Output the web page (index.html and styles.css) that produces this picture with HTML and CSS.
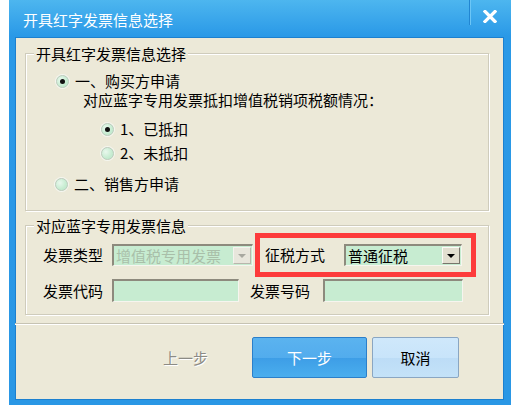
FILE: index.html
```html
<!DOCTYPE html>
<html>
<head>
<meta charset="utf-8">
<link rel="stylesheet" href="styles.css">
</head>
<body>
<div class="window">
  <div class="titlebar">
    <span class="title">开具红字发票信息选择</span>
    <span class="tsep"></span>
    <svg class="close" width="14" height="13" viewBox="0 0 14 13"><path d="M2 1.5 L12 11.5 M12 1.5 L2 11.5" stroke="#fff" stroke-width="3.2" stroke-linecap="square"/></svg>
  </div>
  <div class="content">
    <div class="group g1">
      <span class="legend">开具红字发票信息选择</span>
      <div class="row r1"><span class="radio checked"></span><span>一、购买方申请</span></div>
      <div class="row note">对应蓝字专用发票抵扣增值税销项税额情况：</div>
      <div class="row r3"><span class="radio checked"></span><span>1、已抵扣</span></div>
      <div class="row r4"><span class="radio"></span><span>2、未抵扣</span></div>
      <div class="row r5"><span class="radio"></span><span>二、销售方申请</span></div>
    </div>
    <div class="group g2">
      <span class="legend">对应蓝字专用发票信息</span>
      <div class="rowA">
        <span class="lbl">发票类型</span>
        <div class="combo disabled c1"><span class="cval">增值税专用发票</span><span class="dd"><span class="tri"></span></span></div>
        <div class="redbox">
          <span class="lbl">征税方式</span>
          <div class="combo c2"><span class="cval">普通征税</span><span class="dd"><span class="tri"></span></span></div>
        </div>
      </div>
      <div class="rowB">
        <span class="lbl">发票代码</span>
        <div class="input i1"></div>
        <span class="lbl l2">发票号码</span>
        <div class="input i2"></div>
      </div>
    </div>
    <div class="hsep"></div>
    <div class="buttons">
      <div class="btn btn-prev">上一步</div>
      <div class="btn btn-next">下一步</div>
      <div class="btn btn-cancel">取消</div>
    </div>
  </div>
</div>
</body>
</html>
```
FILE: styles.css
```css
body {
  margin: 0;
  background: #fff;
  font-family: "Noto Sans CJK SC", "Noto Sans", sans-serif;
  font-size: 15px;
  color: #000;
}
.window {
  margin-left: 9px;
  width: 502px;
  height: 405px;
  box-sizing: border-box;
  background: linear-gradient(#4db6ef, #2a99e7 36px, #2a97e5);
  padding: 0 7px 5px 6px;
  display: flex;
  flex-direction: column;
}
.titlebar {
  height: 37px;
  flex: none;
  display: flex;
  align-items: flex-start;
  color: #fff;
}
.title {
  margin: 10px 0 0 8px;
  line-height: 20px;
}
.tsep {
  margin-left: auto;
  width: 1px;
  height: 25px;
  background: #2186d2;
  box-shadow: 1px 0 0 #6cc6f6;
}
.close {
  margin: 10px 7px 0 13px;
}
.content {
  flex: 1;
  background: #ece9d8;
  display: flex;
  flex-direction: column;
  box-shadow: inset 0 0 0 1px #1c80cf;
}
.group {
  position: relative;
  margin-left: 10px;
  width: 464px;
  box-sizing: border-box;
  border: 1px solid #cfccbc;
  box-shadow: inset 1px 1px 0 #fff, 1px 1px 0 #fff;
}
.legend {
  position: absolute;
  top: -10px;
  left: 8px;
  padding: 0 2px;
  background: #ece9d8;
  line-height: 20px;
}
.g1 {
  margin-top: 16px;
  height: 158px;
  padding: 18px 0 0 30px;
}
.row {
  display: flex;
  align-items: center;
  height: 18px;
  line-height: 18px;
}
.radio {
  flex: none;
  position: relative;
  width: 13px;
  height: 13px;
  box-sizing: border-box;
  border-radius: 50%;
  border: 1px solid #bccdbf;
  background: radial-gradient(circle at 35% 35%, #e9f8ed 0, #c6ecd1 60%, #bde6c9 100%);
  box-shadow: 0 0 0 1px #f4f6f0;
  margin-right: 6px;
}
.radio.checked::after {
  content: "";
  position: absolute;
  left: 3px;
  top: 3px;
  width: 5px;
  height: 5px;
  border-radius: 50%;
  background: #111;
}
.note { margin-left: 27px; margin-top: 1px; }
.r3 { margin-top: 11px; margin-left: 45px; }
.r4 { margin-top: 6px; margin-left: 45px; }
.r5 { margin-top: 13px; margin-left: -1px; }

.g2 {
  margin-top: 14px;
  height: 90px;
  padding: 7px 0 0 17px;
}
.rowA, .rowB {
  display: flex;
  align-items: center;
}
.lbl {
  width: 60px;
  flex: none;
  line-height: 18px;
}
.combo, .input {
  box-sizing: border-box;
  border-style: solid;
  border-color: #8d8a7d #f6f5ef #f6f5ef #8d8a7d;
  border-width: 2px 1px 1px 2px;
  background: #c7ecd1;
}
.combo {
  height: 22px;
  display: flex;
  align-items: center;
}
.cval {
  flex: 1;
  padding-left: 2px;
  line-height: 18px;
  white-space: nowrap;
}
.c1 {
  margin-left: 9px;
  width: 141px;
}
.disabled .cval { color: #a9bfa9; }
.dd {
  flex: none;
  width: 18px;
  height: 17px;
  margin-right: 1px;
  box-sizing: border-box;
  border-style: solid;
  border-width: 1px;
  border-color: #fbfaf6 #77756b #77756b #fbfaf6;
  background: #e2dfd0;
  display: flex;
  align-items: center;
  justify-content: center;
}
.tri {
  width: 0;
  height: 0;
  border-left: 4px solid transparent;
  border-right: 4px solid transparent;
  border-top: 4px solid #000;
}
.disabled .dd { background: #e8e6dc; border-color: #f4f3ee #b8b6ac #b8b6ac #f4f3ee; }
.disabled .tri { border-top-color: #a8a8a0; }
.redbox {
  margin-left: 2px;
  width: 221px;
  height: 44px;
  box-sizing: border-box;
  border: 5px solid #fd3b3b;
  padding-left: 5px;
  display: flex;
  align-items: center;
}
.c2 {
  margin-left: 19px;
  width: 118px;
}
.rowB {
  margin-top: 2px;
  height: 23px;
}
.input { height: 23px; }
.i1 { margin-left: 9px; width: 127px; }
.l2 { margin-left: 11px; }
.i2 { margin-left: 13px; width: 140px; }

.hsep {
  margin-top: 8px;
  height: 1px;
  background: #c6c3b3;
  box-shadow: 0 1px 0 #fff;
}
.buttons {
  display: flex;
  justify-content: flex-end;
  margin-top: 13px;
  padding-right: 45px;
  gap: 5px;
}
.btn {
  height: 41px;
  box-sizing: border-box;
  display: flex;
  align-items: center;
  justify-content: center;
  border-radius: 2px;
}
.btn-prev {
  width: 115px;
  margin-right: 4px;
  color: #8c8b85;
  text-shadow: 1px 1px 0 #fff;
}
.btn-next {
  width: 115px;
  border: 1px solid #2b7fca;
  background: linear-gradient(#5bb3ef 0, #52aced 50%, #3d9de6 50%, #4aaeee 100%);
  color: #fff;
}
.btn-cancel {
  width: 87px;
  border: 1px solid #8aa6c2;
  background: linear-gradient(#cfe8fb 0, #c8e4fa 50%, #bcdcf6 50%, #c4e2f8 100%);
  color: #000;
}
```
